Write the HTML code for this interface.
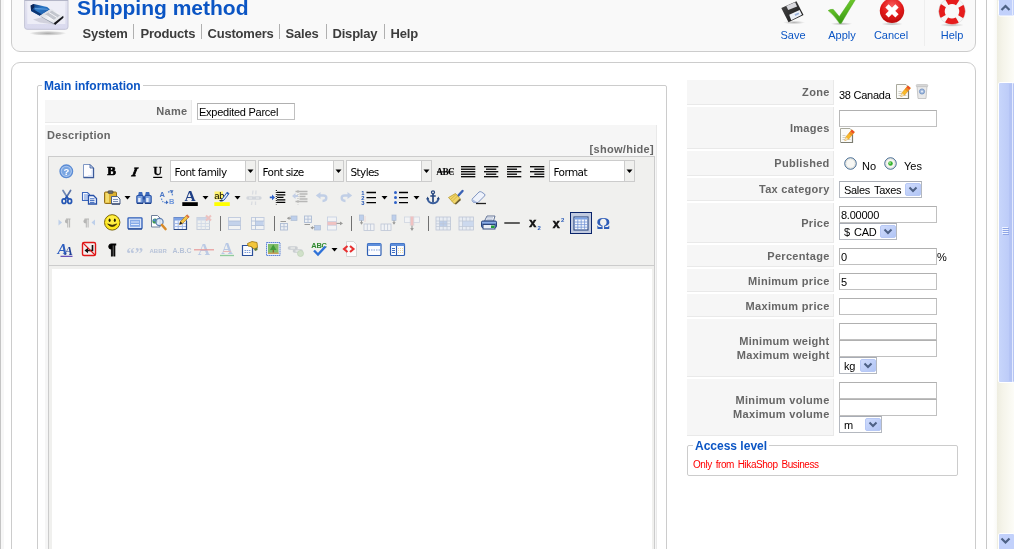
<!DOCTYPE html><html><head><meta charset="utf-8"><title>Shipping method</title><style>
html,body{margin:0;padding:0;overflow:hidden;}
body{width:1014px;height:549px;overflow:hidden;position:relative;background:#fff;font-family:"Liberation Sans",sans-serif;font-size:11px;color:#000;}
div,span,svg{position:absolute;box-sizing:border-box;}
.t{white-space:nowrap;line-height:1;}
.key{background:#f6f6f6;border-bottom:1px solid #e9e9e9;border-right:1px solid #e9e9e9;}
.lab{color:#666;font-weight:bold;font-size:11px;letter-spacing:0.3px;text-align:right;white-space:nowrap;line-height:14px;}
.inp{background:#fff;border:1px solid #c0c0c0;border-top-color:#b0b0b0;border-left-color:#b8b8b8;}
.inp span{left:1px;top:2px;font-size:11px;line-height:12px;white-space:nowrap;letter-spacing:-0.25px;}
.sel{background:#fff;border:1px solid #b4b8bf;border-top-color:#a8acb4}
.sel span.v{left:4px;top:2px;font-size:11px;line-height:12px;white-space:nowrap;letter-spacing:-0.3px;word-spacing:1.5px}
.leg{color:#0B55C4;font-weight:bold;font-size:12px;background:#fff;white-space:nowrap;line-height:14px;padding:0 2px;}
.tb{font-size:11px;color:#0B55C4;white-space:nowrap;line-height:12px;text-align:center;}
.lb{background:#fff;border:1px solid #ccc;}
.lb span{left:4px;top:4px;font-size:11px;line-height:12px;white-space:nowrap;font-family:"DejaVu Sans","Liberation Sans",sans-serif;letter-spacing:-0.5px}
.lbo{background:#f0f0ee;border:1px solid #ccc;border-left:0;}
</style></head><body><div id="wrap" style="left:0;top:0;width:1014px;height:549px;overflow:hidden;will-change:transform">
<div style="left:0px;top:0px;width:1px;height:549px;background:#c4c4c4"></div>
<div style="left:1px;top:0px;width:3px;height:549px;background:#f7f7f7"></div>
<div style="left:986px;top:0px;width:1px;height:549px;background:#c8c8c8"></div>
<div style="left:987px;top:0px;width:10px;height:549px;background:linear-gradient(90deg,#fff 60%,#f9f9f6)"></div>
<div style="left:11px;top:-20px;width:965px;height:72px;border:1px solid #ccc;border-radius:9px;background:#f9f9f9"></div>
<div style="left:11px;top:62px;width:965px;height:520px;border:1px solid #ccc;border-radius:9px;background:#fff"></div>
<svg style="left:23px;top:0px;" width="48" height="40" viewBox="0 0 48 40">
<defs>
<linearGradient id="lgA" x1="0" y1="0" x2="0" y2="1"><stop offset="0" stop-color="#b4b6c8"/><stop offset="0.06" stop-color="#d5d6e4"/><stop offset="0.2" stop-color="#e4e4f0"/><stop offset="1" stop-color="#d9d9ee"/></linearGradient>
<linearGradient id="lgB" x1="0" y1="0" x2="1" y2="1"><stop offset="0" stop-color="#0c2f6a"/><stop offset="0.45" stop-color="#2b78c8"/><stop offset="1" stop-color="#1b4f96"/></linearGradient>
<linearGradient id="lgW" x1="0" y1="0" x2="1" y2="1"><stop offset="0" stop-color="#c9ccd4"/><stop offset="0.5" stop-color="#f4f5f8"/><stop offset="1" stop-color="#d0d3da"/></linearGradient>
<radialGradient id="lgS" cx="0.5" cy="0.5" r="0.5"><stop offset="0" stop-color="#a8a8a8"/><stop offset="0.7" stop-color="#c4c4c4" stop-opacity="0.6"/><stop offset="1" stop-color="#c4c4c4" stop-opacity="0"/></radialGradient>
<filter id="blur1"><feGaussianBlur stdDeviation="0.6"/></filter>
</defs>
<ellipse cx="24.8" cy="33.3" rx="18.5" ry="2.4" fill="url(#lgS)"/>
<rect x="1.6" y="-6" width="43.4" height="35.3" rx="2.5" fill="url(#lgA)" stroke="#c3c4d6" stroke-width="1"/>
<rect x="1.6" y="0" width="43.4" height="1" fill="#b4b6c8"/><rect x="4.3" y="1.2" width="38" height="22.8" fill="#f0f0f8" opacity="0.85"/>
<g filter="url(#blur1)">
<path d="M10 19.5 L20 17 L31 24.6 L17 22.5 Z" fill="#b9bac6" opacity="0.55"/>
<path d="M7.7 5.5 L10.7 4 L24.1 6.9 L27 9.5 L16.8 15.7 L8.1 10.9 Z" fill="url(#lgB)"/>
<path d="M7.7 5.5 L10.7 4 L11.5 7 L8.1 10.9 Z" fill="#0a2558"/>
<path d="M8.1 10.9 L16.8 15.7 L19 14.4 L10 9 Z" fill="#0d3573"/>
<path d="M11.5 7.8 L24 8.8 L25.5 9.7 L12 9.2 Z" fill="#6aa6e4" opacity="0.8"/>
<path d="M16.8 15.7 L27 9.5 L29.2 9.5 L40.2 15.7 L39.4 18.2 L31.4 24.8 L19 17.5 Z" fill="url(#lgW)"/>
<path d="M22 14.2 L29 10.8 L37 15.5 L30.5 20 Z" fill="#b4b8c2" opacity="0.75"/>
<path d="M26 12.5 L34 17.5 M23.5 15.5 L31 20.5" stroke="#f8f8fa" stroke-width="0.9"/>
<path d="M16.8 15.7 L19 17.5 L31.4 24.8 L30.7 23.3 Z" fill="#8c94a4"/>
<path d="M30.7 23.3 L40.2 15.7 L40.5 17.8 L32.1 25.1 Z" fill="#14161a"/>
</g>
</svg>
<div class="t" style="left:77px;top:-4px;font-size:21px;font-weight:bold;color:#0B55C4;line-height:24px;">Shipping method</div>
<div class="t" style="left:82.5px;top:26px;font-size:13px;font-weight:bold;color:#3c3c3c;line-height:15px;letter-spacing:-0.2px">System</div>
<div class="t" style="left:140.5px;top:26px;font-size:13px;font-weight:bold;color:#3c3c3c;line-height:15px;letter-spacing:-0.2px">Products</div>
<div class="t" style="left:207.5px;top:26px;font-size:13px;font-weight:bold;color:#3c3c3c;line-height:15px;letter-spacing:-0.2px">Customers</div>
<div class="t" style="left:285.5px;top:26px;font-size:13px;font-weight:bold;color:#3c3c3c;line-height:15px;letter-spacing:-0.2px">Sales</div>
<div class="t" style="left:332.5px;top:26px;font-size:13px;font-weight:bold;color:#3c3c3c;line-height:15px;letter-spacing:-0.2px">Display</div>
<div class="t" style="left:390.5px;top:26px;font-size:13px;font-weight:bold;color:#3c3c3c;line-height:15px;letter-spacing:-0.2px">Help</div>
<div style="left:133px;top:24px;width:1px;height:15px;background:#b0b0b0"></div>
<div style="left:201px;top:24px;width:1px;height:15px;background:#b0b0b0"></div>
<div style="left:279px;top:24px;width:1px;height:15px;background:#b0b0b0"></div>
<div style="left:326px;top:24px;width:1px;height:15px;background:#b0b0b0"></div>
<div style="left:384px;top:24px;width:1px;height:15px;background:#b0b0b0"></div>
<svg style="left:760px;top:0px;" width="220" height="28" viewBox="0 0 220 28">
<defs>
<linearGradient id="gSave" x1="0" y1="0" x2="1" y2="1"><stop offset="0" stop-color="#4a4a4a"/><stop offset="1" stop-color="#151515"/></linearGradient>
<linearGradient id="gChk" x1="0" y1="0" x2="0.3" y2="1"><stop offset="0" stop-color="#86d83a"/><stop offset="0.55" stop-color="#5dbb24"/><stop offset="1" stop-color="#3a9a14"/></linearGradient>
<radialGradient id="gCan" cx="0.5" cy="0.3" r="0.75"><stop offset="0" stop-color="#f75a5a"/><stop offset="0.55" stop-color="#e21a1a"/><stop offset="1" stop-color="#b30a0a"/></radialGradient>
<radialGradient id="gShd" cx="0.5" cy="0.5" r="0.5"><stop offset="0" stop-color="#b5b5b5"/><stop offset="1" stop-color="#b5b5b5" stop-opacity="0"/></radialGradient>
<filter id="blur2"><feGaussianBlur stdDeviation="0.45"/></filter>
</defs>
<!-- save -->
<ellipse cx="34" cy="22.5" rx="11" ry="1.8" fill="url(#gShd)"/>
<g filter="url(#blur2)">
<path d="M21.3 7.9 L36.5 1.2 L43.5 15 L28.5 22.2 Z" fill="url(#gSave)"/>
<path d="M26.3 5.9 L35.1 2.3 L37.1 6.4 L28.2 9.9 Z" fill="#d9d9de"/>
<path d="M29.2 14.8 L39.6 9.9 L42 14.8 L31.2 20.2 Z" fill="#eef2f9"/>
<path d="M34.5 14.2 L38.5 12.4 L39.3 14 L35.3 15.9 Z" fill="#9db4dc"/>
</g>
<!-- apply -->
<ellipse cx="81.5" cy="23.8" rx="11" ry="1.6" fill="url(#gShd)"/>
<g filter="url(#blur2)">
<path d="M68.2 10.6 Q70.5 9 73.3 9.4 L79.3 16.6 Q86 7 92.5 -3 L97 -3 Q89 10 81.2 23.4 L79.6 23.4 Q74 15 68.2 10.6 Z" fill="url(#gChk)" stroke="#4aa81c" stroke-width="0.5"/>
</g>
<!-- cancel -->
<ellipse cx="132" cy="24" rx="11" ry="1.6" fill="url(#gShd)"/>
<circle cx="132" cy="10.8" r="12.2" fill="url(#gCan)" filter="url(#blur2)"/>
<path d="M127 5.8 L137 15.8 M137 5.8 L127 15.8" stroke="#fff" stroke-width="4.6"/>
<!-- help -->
<ellipse cx="192" cy="25" rx="12" ry="1.8" fill="url(#gShd)"/>
<g filter="url(#blur2)">
<circle cx="192" cy="11.3" r="10.3" fill="none" stroke="#f6f6f6" stroke-width="6"/>
<circle cx="192" cy="11.3" r="10.3" fill="none" stroke="#e61b1b" stroke-width="6" stroke-dasharray="11.4 4.78" stroke-dashoffset="5.7"/>
<circle cx="192" cy="11.3" r="13.4" fill="none" stroke="#d4d4d4" stroke-width="0.5"/>
</g>
</svg>
<div class="tb" style="left:763px;top:29px;width:60px;">Save</div>
<div class="tb" style="left:812px;top:29px;width:60px;">Apply</div>
<div class="tb" style="left:861px;top:29px;width:60px;">Cancel</div>
<div class="tb" style="left:922px;top:29px;width:60px;">Help</div>
<div style="left:924px;top:0px;width:1px;height:46px;background:#eee"></div>
<div style="left:37px;top:85px;width:630px;height:500px;border:1px solid #ccc;border-radius:2px"></div>
<div class="leg" style="left:42px;top:79px;">Main information</div>
<div class="key" style="left:45px;top:100px;width:147px;height:23px;"></div>
<div class="lab" style="left:45px;top:104px;width:142.5px;">Name</div>
<div class="inp" style="left:197px;top:103px;width:98px;height:17px;"><span>Expedited Parcel</span></div>
<div class="key" style="left:45px;top:125px;width:612px;height:460px;"></div>
<div class="lab" style="left:47px;top:128px;text-align:left;">Description</div>
<div class="lab" style="left:500px;top:142px;width:154px;">[show/hide]</div>
<div style="left:48px;top:156px;width:607px;height:430px;border:1px solid #ccc;background:#f0f0ee"></div>
<div style="left:49px;top:265px;width:605px;height:1px;background:#ccc"></div>
<div style="left:52px;top:269px;width:600px;height:300px;background:#fff"></div>
<svg style="left:0;top:0" width="700" height="270" viewBox="0 0 700 270"><g transform="translate(56 161)"><circle cx="10.3" cy="10.3" r="6.3" fill="#a9c6ee" stroke="#5a8bd4" stroke-width="1.3"/>
<circle cx="10.3" cy="10.3" r="4.5" fill="#7aa6e2"/>
<text x="10.3" y="13.6" font-size="9.5" font-weight="bold" text-anchor="middle" fill="#fff" font-family="Liberation Sans, sans-serif">?</text></g>
<g transform="translate(79 161)"><path d="M4.5 3.5 L11 3.5 L14.5 7 L14.5 16.5 L4.5 16.5 Z" fill="#fdfdff" stroke="#7f97c4" stroke-width="1"/>
<path d="M14.5 7 L14.5 16.5 L4.5 16.5" fill="none" stroke="#3b5a99" stroke-width="1.3"/>
<path d="M11 3.5 L11 7 L14.5 7 Z" fill="#c6d4ef" stroke="#3b5a99" stroke-width="0.8"/>
<path d="M9 15 L13.3 15 L13.3 9" fill="none" stroke="#d3def5" stroke-width="1.4"/></g>
<g transform="translate(102 161)"><text x="9.6" y="14.2" font-size="13" font-weight="bold" text-anchor="middle" fill="#000" stroke="#000" stroke-width="0.7" font-family="Liberation Serif, serif">B</text></g>
<g transform="translate(125 161)"><g transform="translate(2.3 0) skewX(-12)"><text x="9.8" y="14.6" font-size="12.5" font-weight="bold" font-style="italic" text-anchor="middle" fill="#000" stroke="#000" stroke-width="0.8" font-family="Liberation Serif, serif">I</text></g></g>
<g transform="translate(148 161)"><text x="9.7" y="14.4" font-size="12" font-weight="bold" text-anchor="middle" fill="#000" stroke="#000" stroke-width="0.3" font-family="Liberation Serif, serif">U</text><rect x="5.2" y="15.8" width="9" height="1.2" fill="#000"/></g>
<rect x="170.5" y="160.5" width="75" height="21" fill="#fff" stroke="#ccc"/><rect x="245.5" y="160.5" width="10" height="21" fill="#f0f0ee" stroke="#ccc"/><text x="174.5" y="175.5" font-size="10.5" font-family="DejaVu Sans, Liberation Sans, sans-serif" letter-spacing="-0.6" fill="#000">Font family</text><path d="M247.5 169.5 L253.5 169.5 L250.5 173 Z" fill="#000"/>
<rect x="258.5" y="160.5" width="75" height="21" fill="#fff" stroke="#ccc"/><rect x="333.5" y="160.5" width="10" height="21" fill="#f0f0ee" stroke="#ccc"/><text x="262.5" y="175.5" font-size="10.5" font-family="DejaVu Sans, Liberation Sans, sans-serif" letter-spacing="-0.6" fill="#000">Font size</text><path d="M335.5 169.5 L341.5 169.5 L338.5 173 Z" fill="#000"/>
<rect x="346.5" y="160.5" width="75" height="21" fill="#fff" stroke="#ccc"/><rect x="421.5" y="160.5" width="10" height="21" fill="#f0f0ee" stroke="#ccc"/><text x="350.5" y="175.5" font-size="10.5" font-family="DejaVu Sans, Liberation Sans, sans-serif" letter-spacing="-0.6" fill="#000">Styles</text><path d="M423.5 169.5 L429.5 169.5 L426.5 173 Z" fill="#000"/>
<g transform="translate(435 161)"><text x="10.2" y="14" font-size="9.3" font-weight="bold" text-anchor="middle" fill="#000" font-family="Liberation Serif, serif" letter-spacing="-0.6">ABC</text><rect x="2" y="10.4" width="16.5" height="1" fill="#000"/></g>
<g transform="translate(458 161)"><rect x="3" y="5.05" width="14.3" height="1.3" fill="#000"/><rect x="3" y="7.549999999999999" width="14.3" height="1.3" fill="#000"/><rect x="3" y="10.049999999999999" width="14.3" height="1.3" fill="#000"/><rect x="3" y="12.549999999999999" width="14.3" height="1.3" fill="#000"/><rect x="3" y="15.049999999999999" width="14.3" height="1.3" fill="#000"/></g>
<g transform="translate(481 161)"><rect x="3" y="5.05" width="14.3" height="1.3" fill="#000"/><rect x="5" y="7.549999999999999" width="10.3" height="1.3" fill="#000"/><rect x="3" y="10.049999999999999" width="14.3" height="1.3" fill="#000"/><rect x="5" y="12.549999999999999" width="10.3" height="1.3" fill="#000"/><rect x="3" y="15.049999999999999" width="14.3" height="1.3" fill="#000"/></g>
<g transform="translate(504 161)"><rect x="3" y="5.05" width="14.3" height="1.3" fill="#000"/><rect x="3" y="7.549999999999999" width="10" height="1.3" fill="#000"/><rect x="3" y="10.049999999999999" width="14.3" height="1.3" fill="#000"/><rect x="3" y="12.549999999999999" width="10" height="1.3" fill="#000"/><rect x="3" y="15.049999999999999" width="14.3" height="1.3" fill="#000"/></g>
<g transform="translate(527 161)"><rect x="3" y="5.05" width="14.3" height="1.3" fill="#000"/><rect x="7.3" y="7.549999999999999" width="10.0" height="1.3" fill="#000"/><rect x="3" y="10.049999999999999" width="14.3" height="1.3" fill="#000"/><rect x="7.3" y="12.549999999999999" width="10.0" height="1.3" fill="#000"/><rect x="3" y="15.049999999999999" width="14.3" height="1.3" fill="#000"/></g>
<rect x="549.5" y="160.5" width="75" height="21" fill="#fff" stroke="#ccc"/><rect x="624.5" y="160.5" width="10" height="21" fill="#f0f0ee" stroke="#ccc"/><text x="553.5" y="175.5" font-size="10.5" font-family="DejaVu Sans, Liberation Sans, sans-serif" letter-spacing="-0.6" fill="#000">Format</text><path d="M626.5 169.5 L632.5 169.5 L629.5 173 Z" fill="#000"/>
<g transform="translate(56 187)"><path d="M7 3.5 L12.3 12" stroke="#7088b4" stroke-width="1.7" stroke-linecap="round"/>
<path d="M14.6 3.5 L9.3 12" stroke="#5a74a8" stroke-width="1.7" stroke-linecap="round"/>
<ellipse cx="8" cy="14.2" rx="1.9" ry="2.3" fill="none" stroke="#2456b4" stroke-width="1.7"/>
<ellipse cx="13.7" cy="14.2" rx="1.9" ry="2.3" fill="none" stroke="#2456b4" stroke-width="1.7"/>
<path d="M9.3 12 L10.8 9.6 L12.3 12" fill="none" stroke="#2456b4" stroke-width="1.6"/></g>
<g transform="translate(79 187)"><path d="M3.5 5.5 L8.5 5.5 L10.5 7.5 L10.5 13.5 L3.5 13.5 Z" fill="#f4f8ff" stroke="#3d68bd" stroke-width="1.1"/>
<path d="M5 8 H9 M5 10 H9 M5 12 H9" stroke="#5f88d6" stroke-width="0.9"/>
<path d="M9.5 8.5 L14.5 8.5 L17.5 11.5 L17.5 17 L9.5 17 Z" fill="#f4f8ff" stroke="#2650a8" stroke-width="1.3"/>
<path d="M11 11.8 H15.5 M11 13.6 H15.5 M11 15.4 H15.5" stroke="#3d68bd" stroke-width="1"/></g>
<g transform="translate(102 187)"><rect x="2.5" y="5" width="12" height="11.5" rx="1" fill="#dcb233" stroke="#94701a" stroke-width="1"/>
<rect x="3.5" y="6" width="3.5" height="9.5" fill="#f3dc6e"/>
<rect x="6" y="3.8" width="5" height="2.6" rx="0.8" fill="#6d6d6d" stroke="#3c3c3c" stroke-width="0.6"/>
<path d="M9.5 9.5 L15.5 9.5 L18 12 L18 17 L9.5 17 Z" fill="#f4f6fb" stroke="#4a5f86" stroke-width="1"/>
<path d="M11 12.5 H16 M11 14.5 H16" stroke="#7f93b8" stroke-width="1"/>
<path d="M10 17 H18" stroke="#39496b" stroke-width="1.3"/></g>
<g transform="translate(134 187)"><path d="M4.8 5 H8.2 L9 9 H4 Z" fill="#3a68bb"/><path d="M11.8 5 H15.2 L16 9 H11 Z" fill="#3a68bb"/>
<rect x="2.8" y="8.5" width="6.4" height="7.8" rx="1" fill="#7fa2dc" stroke="#2751a6" stroke-width="1.1"/>
<rect x="10.8" y="8.5" width="6.4" height="7.8" rx="1" fill="#7fa2dc" stroke="#2751a6" stroke-width="1.1"/>
<rect x="4.2" y="11" width="2.4" height="4" fill="#e6eefc"/><rect x="12.2" y="11" width="2.4" height="4" fill="#e6eefc"/>
<rect x="8.8" y="9.5" width="2.4" height="3" fill="#2751a6"/>
<path d="M3 16.3 H9 M11 16.3 H17" stroke="#1d3f86" stroke-width="1.2"/></g>
<g transform="translate(157 187)"><text x="2.5" y="9.5" font-size="7.5" font-weight="bold" fill="#4a76c6" font-family="Liberation Sans, sans-serif">A</text>
<text x="12" y="17.2" font-size="7.5" font-weight="bold" fill="#6f97dc" font-family="Liberation Sans, sans-serif">B</text>
<path d="M4.5 11.5 Q5 16 9.5 15.5" fill="none" stroke="#5f8ad4" stroke-width="1.3" stroke-dasharray="1.4 1.2"/>
<path d="M9 13.3 L11.5 15.5 L9 17.3 Z" fill="#3a68bb"/>
<path d="M11 5 Q15.5 4 15.5 9" fill="none" stroke="#5f8ad4" stroke-width="1.3" stroke-dasharray="1.4 1.2"/>
<path d="M12.5 3 L16.5 3.2 L15 6.5 Z" fill="#3a68bb" opacity="0.85"/></g>
<g transform="translate(180 187)"><text x="10" y="14.3" font-size="15.5" font-weight="bold" text-anchor="middle" fill="#1f3f86" font-family="Liberation Serif, serif">A</text><rect x="2.3" y="15.2" width="15.5" height="3.8" fill="#000"/></g>
<g transform="translate(212 187)"><rect x="2.5" y="4.5" width="8.5" height="8" fill="#fff36b"/>
<text x="2.3" y="11.6" font-size="9.5" fill="#000" font-family="Liberation Sans, sans-serif" letter-spacing="-0.4">ab</text>
<path d="M8.5 14.2 L10.3 11.8 L15.2 5.2 L17 6.6 L12 13.2 Z" fill="#dfe9fa" stroke="#2f5fb3" stroke-width="1"/>
<path d="M14.3 6.3 L15.2 5.2 L17 6.6 L16 7.8 Z" fill="#2f5fb3"/>
<path d="M7.5 13.5 L10.8 13.8" stroke="#333" stroke-width="1"/>
<rect x="2.3" y="15.2" width="15.5" height="3.8" fill="#ffff00"/></g>
<g transform="translate(244 187)"><g opacity="0.22"><path d="M4 11 H9 M11 11 H16" stroke="#6b7f9e" stroke-width="3.4" stroke-linecap="round"/>
<path d="M5 11 H8 M12 11 H15" stroke="#eef2f8" stroke-width="1.2"/>
<path d="M9 3.5 L8.5 7.5 M12 3.5 L11.8 7.5 M8 14.5 L7.5 18 M11.5 14.5 L11.5 18" stroke="#8a9ab5" stroke-width="1.3"/></g></g>
<g transform="translate(267 187)"><path d="M10 5.4 H18.3 M10 7.9 H18.3 M10 10.4 H16.5 M10 12.9 H18.3 M10 15.4 H18.3" stroke="#000" stroke-width="1.3"/>
<path d="M9.3 3 V17.5" stroke="#000" stroke-width="1" stroke-dasharray="1 1"/>
<path d="M2.8 9.5 H5 V7.5 L8 10.4 L5 13.3 V11.3 H2.8 Z" fill="#2f62c9"/></g>
<g transform="translate(290 187)"><g opacity="0.23"><path d="M5.5 4.5 H17.5 M9.5 7 H17.5 M9.5 9.5 H15.5 M9.5 12 H17.5 M5.5 14.5 H17.5" stroke="#000" stroke-width="1.3"/>
<path d="M8 3 V17.5" stroke="#000" stroke-width="1" stroke-dasharray="1 1"/>
<path d="M8 8 H5.5 V6 L2 9 L5.5 12 V10 H8 Z" fill="#2f62c9"/></g></g>
<g transform="translate(313 187)"><g opacity="0.26"><path d="M7 8.5 H10.5 Q13.3 8.5 13.3 11 Q13.3 13.8 9.5 14" fill="none" stroke="#3f73d0" stroke-width="2.4"/>
<path d="M2.8 8.5 L7.5 5 V12 Z" fill="#3f73d0"/></g></g>
<g transform="translate(336 187)"><g opacity="0.26"><path d="M12 8.5 H8.5 Q5.7 8.5 5.7 11 Q5.7 13.8 9.5 14" fill="none" stroke="#3f73d0" stroke-width="2.4"/>
<path d="M16.2 8.5 L11.5 5 V12 Z" fill="#3f73d0"/></g></g>
<g transform="translate(359 187)"><path d="M7.5 5.5 H17 M7.5 10.6 H17 M7.5 15.6 H17" stroke="#000" stroke-width="1.3"/>
<text x="2.3" y="7.8" font-size="5.8" font-weight="bold" fill="#2456b4" font-family="Liberation Sans, sans-serif">1</text>
<text x="2.3" y="13" font-size="5.8" font-weight="bold" fill="#2456b4" font-family="Liberation Sans, sans-serif">2</text>
<text x="2.3" y="18.2" font-size="5.8" font-weight="bold" fill="#2456b4" font-family="Liberation Sans, sans-serif">3</text></g>
<g transform="translate(391 187)"><path d="M8 5.5 H17 M8 10.6 H17 M8 15.6 H17" stroke="#000" stroke-width="1.3"/>
<circle cx="4.5" cy="5.5" r="1.5" fill="#2f62c9"/><circle cx="4.5" cy="10.6" r="1.5" fill="#2f62c9"/><circle cx="4.5" cy="15.6" r="1.5" fill="#2f62c9"/></g>
<g transform="translate(423 187)"><circle cx="10" cy="5.3" r="1.5" fill="none" stroke="#27477f" stroke-width="1.3"/>
<path d="M10 6.8 V15.5 M7.3 9 H12.7" stroke="#27477f" stroke-width="1.7"/>
<path d="M4.5 11 Q5 16 10 16.3 Q15 16 15.5 11" fill="none" stroke="#3a5e9c" stroke-width="1.9"/>
<path d="M3.3 12.5 L4.5 9.5 L6.3 12.3 Z M16.7 12.5 L15.5 9.5 L13.7 12.3 Z" fill="#27477f"/></g>
<g transform="translate(446 187)"><path d="M11.5 9.5 L16.5 4" stroke="#3a62b5" stroke-width="2.4" stroke-linecap="round"/>
<path d="M2.5 10.5 L9.5 6.5 L14 11.5 L8.5 17 Z" fill="#f0d568" stroke="#b89a30" stroke-width="0.8"/>
<path d="M6 14.5 L11.5 9 M4.5 12.5 L10 7.5" stroke="#d2b23f" stroke-width="0.9"/>
<path d="M8.5 17 L14 11.5 L15 13 L10 17.5 Z" fill="#6a5a2a"/></g>
<g transform="translate(469 187)"><path d="M3.2 12 L10 5 Q11 4.2 12.5 5 L15.5 7 Q16.5 8 15.5 9 L9 15.5 L4.5 15.5 Q2.5 14 3.2 12 Z" fill="#eef2fb" stroke="#7e93bf" stroke-width="1"/>
<path d="M3.2 12 L7 14.5 L9 15.5 L4.5 15.5 Q2.5 14 3.2 12 Z" fill="#aebfe2"/>
<path d="M7 16.5 H17" stroke="#222" stroke-width="1.3"/></g>
<path d="M124.5 196.0 L130.5 196.0 L127.5 199.5 Z" fill="#000"/>
<path d="M202.5 196.0 L208.5 196.0 L205.5 199.5 Z" fill="#000"/>
<path d="M234.5 196.0 L240.5 196.0 L237.5 199.5 Z" fill="#000"/>
<path d="M381.5 196.0 L387.5 196.0 L384.5 199.5 Z" fill="#000"/>
<path d="M413.5 196.0 L419.5 196.0 L416.5 199.5 Z" fill="#000"/>
<rect x="570.5" y="212.5" width="21" height="21" fill="#c2cbe0" stroke="#0a246a"/>
<g transform="translate(56 213)"><g opacity="0.3"><path d="M2.5 6.5 L6 9.5 L2.5 12.5 Z" fill="#4a86e0"/>
<path d="M10 6 H14.5 M11.8 6 V14.5 M13.6 6 V14.5" stroke="#333" stroke-width="1"/><path d="M11.8 6 Q9 6 9 8.2 Q9 10.4 11.8 10.4 Z" fill="#333"/></g></g>
<g transform="translate(79 213)"><g opacity="0.3"><path d="M16 6.5 L12.5 9.5 L16 12.5 Z" fill="#4a86e0"/>
<path d="M5.5 6 H10 M7.3 6 V14.5 M9.1 6 V14.5" stroke="#333" stroke-width="1"/><path d="M7.3 6 Q4.5 6 4.5 8.2 Q4.5 10.4 7.3 10.4 Z" fill="#333"/></g></g>
<g transform="translate(102 213)"><circle cx="10.2" cy="9.4" r="7.7" fill="#ffe91f" stroke="#7a6408" stroke-width="1"/>
<circle cx="10.2" cy="8" r="5.5" fill="#fff45e" opacity="0.6"/>
<ellipse cx="7.6" cy="7.2" rx="1" ry="1.7" fill="#221b00"/><ellipse cx="12.8" cy="7.2" rx="1" ry="1.7" fill="#221b00"/>
<path d="M5.7 11 Q10.2 16 14.7 11 Q10.2 13.6 5.7 11 Z" fill="#3a2a00" stroke="#3a2a00" stroke-width="0.8"/></g>
<g transform="translate(125 213)"><rect x="3" y="4.8" width="14" height="11" rx="0.8" fill="#dbe6f9" stroke="#2d5cb8" stroke-width="1.3"/>
<rect x="5" y="6.8" width="10" height="7" fill="#86aae8"/>
<path d="M6 9 H14 M6 11.5 H14" stroke="#dfe9fb" stroke-width="1.1"/>
<path d="M3 16 H17" stroke="#1d3f86" stroke-width="1"/></g>
<g transform="translate(148 213)"><path d="M3.5 2.5 L9.5 2.5 L12 5 L12 14 L3.5 14 Z" fill="#fff" stroke="#6f7f99" stroke-width="1"/>
<circle cx="7" cy="8" r="2.6" fill="#3f9a4f"/><circle cx="6.3" cy="7.3" r="1.2" fill="#4d86d6"/>
<circle cx="11.5" cy="9" r="3.6" fill="#dbe9fb" fill-opacity="0.8" stroke="#5f7fb0" stroke-width="1.2"/>
<path d="M14 12 L17.5 16" stroke="#d88a2a" stroke-width="2.6" stroke-linecap="round"/></g>
<g transform="translate(171 213)"><rect x="3" y="4.5" width="12.5" height="12" fill="#f1f5fd" stroke="#5877b5" stroke-width="1"/>
<rect x="3" y="4.5" width="12.5" height="3" fill="#7da2e4"/>
<path d="M7.2 7.5 V16.5 M11.4 7.5 V16.5 M3 10.5 H15.5 M3 13.5 H15.5" stroke="#9db6e6" stroke-width="0.9"/>
<path d="M3 16.5 H15.5 V8" fill="none" stroke="#2a4780" stroke-width="1.2"/>
<path d="M8.5 11.5 L9.5 8.5 L16 1.8 L18.2 3.8 L11.5 10.6 Z" fill="#f3c54a" stroke="#b07a18" stroke-width="0.7"/>
<path d="M15 2.8 L16 1.8 L18.2 3.8 L17.2 4.9 Z" fill="#e4674a"/>
<path d="M8.5 11.5 L9.5 8.5 L11.5 10.6 Z" fill="#222"/></g>
<g transform="translate(194 213)"><g opacity="0.22"><rect x="3" y="4.5" width="12.5" height="12" fill="#e8effb" stroke="#34579a" stroke-width="1"/>
<rect x="3" y="4.5" width="12.5" height="3" fill="#4f7fd3"/>
<path d="M7.2 7.5 V16.5 M11.4 7.5 V16.5 M3 10.5 H15.5 M3 13.5 H15.5" stroke="#6b8fd0" stroke-width="0.9"/>
<path d="M12 2.5 L17 7.5 M17 2.5 L12 7.5" stroke="#e02020" stroke-width="2"/></g></g>
<g transform="translate(225 213)"><g opacity="0.4"><rect x="3.5" y="4.5" width="12" height="12" fill="#f4f7fd" stroke="#7f99c8" stroke-width="1"/>
<rect x="4" y="8" width="11" height="4.5" fill="#7fa6e6"/><path d="M3.5 8 H15.5 M3.5 12.5 H15.5" stroke="#4d72b5" stroke-width="0.8"/></g></g>
<g transform="translate(248 213)"><g opacity="0.4"><rect x="3.5" y="4.5" width="12.5" height="12" fill="#f4f7fd" stroke="#7f99c8" stroke-width="1"/>
<rect x="7.5" y="8" width="8" height="4.5" fill="#7fa6e6"/><path d="M3.5 8 H16 M3.5 12.5 H16 M7.5 4.5 V16.5" stroke="#4d72b5" stroke-width="0.8"/></g></g>
<g transform="translate(279 213)"><g opacity="0.45"><rect x="1.5" y="10.5" width="7" height="6.5" fill="#e8effb" stroke="#5f7fb5" stroke-width="0.9"/><path d="M5 10.5 V17 M1.5 13.7 H8.5" stroke="#5f7fb5" stroke-width="0.8"/>
<rect x="12" y="3" width="6" height="4.5" fill="#7fa6e6" stroke="#5f7fb5" stroke-width="0.7"/>
<path d="M12 5.2 H8.5 M1.5 8.5 H7" stroke="#333" stroke-width="1"/><path d="M10.5 3.5 L8 5.2 L10.5 7 Z" fill="#333"/></g></g>
<g transform="translate(302 213)"><g opacity="0.45"><rect x="2.5" y="3" width="7" height="6.5" fill="#e8effb" stroke="#5f7fb5" stroke-width="0.9"/><path d="M6 3 V9.5 M2.5 6.2 H9.5" stroke="#5f7fb5" stroke-width="0.8"/>
<rect x="12.5" y="12.5" width="6" height="4.5" fill="#7fa6e6" stroke="#5f7fb5" stroke-width="0.7"/>
<path d="M12.5 14.7 H9 M2.5 11.5 H8" stroke="#333" stroke-width="1"/><path d="M11 13 L8.5 14.7 L11 16.5 Z" fill="#333"/></g></g>
<g transform="translate(325 213)"><g opacity="0.45"><rect x="2.5" y="4" width="9" height="13" fill="#f4f7fd" stroke="#8fa6cf" stroke-width="0.8"/>
<rect x="2.5" y="8.5" width="9" height="3.8" fill="#f08a8a"/><path d="M2.5 8.5 H11.5 M2.5 12.3 H11.5" stroke="#8fa6cf" stroke-width="0.7"/>
<path d="M11.5 10.4 H17" stroke="#333" stroke-width="1.1"/><path d="M15 8.5 L18 10.4 L15 12.3 Z" fill="#333"/></g></g>
<g transform="translate(356 213)"><g opacity="0.45"><rect x="8" y="11" width="10" height="6.5" fill="#f4f7fd" stroke="#7f93b8" stroke-width="0.8"/><path d="M11.3 11 V17.5 M14.6 11 V17.5" stroke="#7f93b8" stroke-width="0.8"/>
<rect x="3.5" y="2" width="4" height="5.5" fill="#7fa6e6" stroke="#5f7fb5" stroke-width="0.7"/>
<path d="M5.5 7.5 V10.5" stroke="#333" stroke-width="1"/><path d="M3.8 9.3 L5.5 11.8 L7.2 9.3 Z" fill="#333"/><path d="M9 3 V9" stroke="#e8b0b0" stroke-width="0.8"/></g></g>
<g transform="translate(379 213)"><g opacity="0.45"><rect x="2" y="11" width="10" height="6.5" fill="#f4f7fd" stroke="#7f93b8" stroke-width="0.8"/><path d="M5.3 11 V17.5 M8.6 11 V17.5" stroke="#7f93b8" stroke-width="0.8"/>
<rect x="13" y="2" width="4" height="5.5" fill="#7fa6e6" stroke="#5f7fb5" stroke-width="0.7"/>
<path d="M15 7.5 V10.5" stroke="#333" stroke-width="1"/><path d="M13.3 9.3 L15 11.8 L16.7 9.3 Z" fill="#333"/></g></g>
<g transform="translate(402 213)"><g opacity="0.45"><rect x="2.5" y="4" width="15" height="5.5" fill="#f4f7fd" stroke="#a8b6d0" stroke-width="0.8"/>
<rect x="8.2" y="3.5" width="3.6" height="9" fill="#f08a8a"/><path d="M8.2 4 V12.5 M11.8 4 V12.5" stroke="#a8b6d0" stroke-width="0.7"/>
<path d="M10 12.5 V16.5" stroke="#333" stroke-width="1.1"/><path d="M8.2 15 L10 18 L11.8 15 Z" fill="#333"/></g></g>
<g transform="translate(433 213)"><g opacity="0.45"><rect x="3" y="4" width="14.5" height="13" fill="#dfe8f8" stroke="#7f93b8" stroke-width="0.8"/>
<rect x="6.5" y="8" width="7.5" height="5.5" fill="#7fa6e6"/>
<path d="M6.5 4 V17 M10.2 4 V17 M14 4 V17 M3 8 H17.5 M3 10.8 H17.5 M3 13.5 H17.5" stroke="#7f93b8" stroke-width="0.7"/></g></g>
<g transform="translate(456 213)"><g opacity="0.45"><rect x="3" y="4" width="14.5" height="13" fill="#dfe8f8" stroke="#7f93b8" stroke-width="0.8"/>
<rect x="6.5" y="8" width="11" height="5.5" fill="#9fbcee"/>
<path d="M6.5 4 V17 M3 8 H17.5 M3 13.5 H17.5 M10.2 4 V8 M14 4 V8 M10.2 13.5 V17 M14 13.5 V17" stroke="#7f93b8" stroke-width="0.7"/></g></g>
<g transform="translate(479 213)"><path d="M5.5 8 L8 3 L16 3 L14.5 8 Z" fill="#f7f9fd" stroke="#52658a" stroke-width="0.9"/>
<path d="M8 4.8 H14 M7.5 6.3 H13.5" stroke="#9aa8c4" stroke-width="0.7"/>
<rect x="2.5" y="8" width="15" height="6.5" rx="1.2" fill="#6a8cc8" stroke="#2a4680" stroke-width="1"/>
<rect x="4" y="11.5" width="12" height="4.5" fill="#e9eef8" stroke="#203a73" stroke-width="0.9"/>
<rect x="12" y="12.5" width="3.5" height="2.5" fill="#21a038"/>
<path d="M3 9.5 H17" stroke="#8fb0ea" stroke-width="0.9"/></g>
<g transform="translate(502 213)"><rect x="2.3" y="9.4" width="15.5" height="1.2" fill="#000"/></g>
<g transform="translate(525 213)"><text x="4.3" y="13.8" font-size="12.5" font-weight="bold" fill="#111" stroke="#111" stroke-width="0.5" font-family="Liberation Sans, sans-serif">x</text><text x="12.6" y="16.5" font-size="6" font-weight="bold" fill="#2a5bb8" font-family="Liberation Sans, sans-serif">2</text><path d="M4.7 7.7 L11 14 M11 7.7 L4.7 14" stroke="#111" stroke-width="2.1" opacity="0"/></g>
<g transform="translate(548 213)"><text x="4.8" y="15" font-size="12.5" font-weight="bold" fill="#111" stroke="#111" stroke-width="0.5" font-family="Liberation Sans, sans-serif">x</text><text x="13" y="9" font-size="6" font-weight="bold" fill="#2a5bb8" font-family="Liberation Sans, sans-serif">2</text></g>
<g transform="translate(571 213)"><rect x="3" y="4" width="14" height="13" fill="#f4f7fd" stroke="#2a4780" stroke-width="1.1"/>
<rect x="3.5" y="4.5" width="13" height="2" fill="#7da2e4"/>
<path d="M6.8 6.5 V17 M10.2 6.5 V17 M13.6 6.5 V17 M3 9 H17 M3 11.6 H17 M3 14.2 H17" stroke="#6f92d4" stroke-width="0.75"/></g>
<g transform="translate(594 213)"><text x="9.4" y="15.8" font-size="17" font-weight="bold" text-anchor="middle" fill="#2d5cb8" font-family="Liberation Serif, serif">Ω</text></g>
<rect x="220" y="216" width="1" height="15" fill="#707070"/>
<rect x="274" y="216" width="1" height="15" fill="#707070"/>
<rect x="351" y="216" width="1" height="15" fill="#707070"/>
<rect x="428" y="216" width="1" height="15" fill="#707070"/>
<g transform="translate(56 239)"><text x="1.5" y="14.5" font-size="15" font-weight="bold" font-style="italic" fill="#2f5fc0" font-family="Liberation Serif, serif">A</text>
<text x="8.5" y="15.5" font-size="12.5" font-weight="bold" font-style="italic" fill="#1f3f96" font-family="Liberation Serif, serif">A</text>
<path d="M4.5 17.3 H16.5" stroke="#4f35b0" stroke-width="1.1"/></g>
<g transform="translate(79 239)"><rect x="3.5" y="3.5" width="13" height="13" rx="1.5" fill="#f4f0f0" stroke="#e01818" stroke-width="1.4"/>
<path d="M13.5 6 V11.5 H7" fill="none" stroke="#111" stroke-width="1.6"/><path d="M9 8.8 L5.5 11.5 L9 14.2 Z" fill="#111"/>
<path d="M4 4 L16 16" stroke="#e01818" stroke-width="1.1"/></g>
<g transform="translate(102 239)"><text x="10.2" y="15" font-size="14.5" font-weight="bold" text-anchor="middle" fill="#000" stroke="#000" stroke-width="0.8" font-family="Liberation Sans, sans-serif">¶</text></g>
<g transform="translate(125 239)"><g opacity="0.35"><text x="1.2" y="19.5" font-size="17" font-weight="bold" fill="#5f7fc0" font-family="Liberation Serif, serif" letter-spacing="0">“”</text></g></g>
<g transform="translate(148 239)"><g opacity="0.35"><text x="1.5" y="14" font-size="6" font-weight="bold" fill="#4d6fb0" font-family="Liberation Sans, sans-serif">ABBR</text></g></g>
<g transform="translate(171 239)"><g opacity="0.35"><text x="1.5" y="14" font-size="7" font-weight="bold" fill="#4d6fb0" font-family="Liberation Sans, sans-serif">A.B.C</text></g></g>
<g transform="translate(194 239)"><g opacity="0.45"><text x="10" y="15.5" font-size="17" font-weight="bold" text-anchor="middle" fill="#7f9fdc" font-family="Liberation Serif, serif">A</text><path d="M0 10.8 H20" stroke="#e03030" stroke-width="1.2"/></g></g>
<g transform="translate(217 239)"><g opacity="0.5"><text x="10" y="14.5" font-size="16" font-weight="bold" text-anchor="middle" fill="#7f9fdc" font-family="Liberation Serif, serif">A</text><path d="M3 16.5 H17" stroke="#2fa84a" stroke-width="1.3"/><path d="M6 12.5 H14" stroke="#e08080" stroke-width="1"/></g></g>
<g transform="translate(240 239)"><path d="M2.5 6.5 L10.5 6.5 L12.5 8.5 L12.5 16.5 L2.5 16.5 Z" fill="#fbfcff" stroke="#2a4f9a" stroke-width="1.2"/>
<path d="M4.5 11.5 H10.5 M4.5 13.5 H10.5" stroke="#7f9fd8" stroke-width="1" stroke-dasharray="1.5 0.7"/>
<path d="M7.5 4.5 L12 2.5 L17 3.5 L17.5 8.5 L14 10 L11 7.5 L8 7 Z" fill="#f3c63a" stroke="#9a7210" stroke-width="0.8"/>
<path d="M14 10 L17.5 8.5 L17.5 11 L15 12 Z" fill="#5f7a3a"/></g>
<g transform="translate(263 239)"><rect x="3.5" y="3.5" width="13.5" height="13" fill="#e8f0fb" stroke="#4f78d4" stroke-width="0.9" stroke-dasharray="1.5 0.5"/>
<rect x="5" y="5" width="10.5" height="10" fill="#7fbc68"/>
<path d="M10.2 5.5 L13.5 11 L7 11 Z" fill="#3f9a3a"/><rect x="9.7" y="11" width="1.2" height="3" fill="#8a5a2a"/>
<rect x="5" y="13.5" width="10.5" height="1.5" fill="#c9a05a"/></g>
<g transform="translate(286 239)"><g opacity="0.33"><path d="M3.5 9 H10" stroke="#7f8a9a" stroke-width="3.6" stroke-linecap="round"/><path d="M4.5 9 H9" stroke="#eef0f4" stroke-width="1.2"/>
<path d="M8.5 12 H15" stroke="#7f8a9a" stroke-width="3.6" stroke-linecap="round"/><path d="M9.5 12 H14" stroke="#eef0f4" stroke-width="1.2"/>
<circle cx="14.5" cy="14.5" r="3" fill="#8fc07f" stroke="#5f9a4f" stroke-width="0.8"/></g></g>
<g transform="translate(309 239)"><text x="10" y="8.8" font-size="7.5" font-weight="bold" text-anchor="middle" fill="#2f8a2f" font-family="Liberation Sans, sans-serif" letter-spacing="-0.2">ABC</text>
<path d="M5 11.5 L9 15.5 L16.5 7.5" fill="none" stroke="#2f72d8" stroke-width="2.4"/></g>
<g transform="translate(341 239)"><path d="M5.5 2.5 L12.5 2.5 L15.5 5.5 L15.5 17.5 L5.5 17.5 Z" fill="#fbfbfb" stroke="#d0d0d0" stroke-width="0.9"/>
<path d="M6.5 7 L3 10 L6.5 13 M9 7 L12.5 10 L9 13" fill="none" stroke="#e83030" stroke-width="2.1"/></g>
<g transform="translate(364 239)"><rect x="3.5" y="4.5" width="13.5" height="12" rx="1" fill="#fbfcff" stroke="#2f5fb3" stroke-width="1.2"/>
<rect x="3.5" y="4.5" width="13.5" height="2.5" fill="#5f8fdc"/>
<path d="M4.5 11 H16" stroke="#7f9fd8" stroke-width="1" stroke-dasharray="1.5 1"/></g>
<g transform="translate(387 239)"><rect x="3.5" y="4.5" width="14" height="12" rx="1" fill="#fbfcff" stroke="#2f5fb3" stroke-width="1.2"/>
<rect x="3.5" y="4.5" width="14" height="2.5" fill="#5f8fdc"/>
<path d="M9.5 7 V16.5" stroke="#2f5fb3" stroke-width="1.1"/>
<path d="M5 9.5 H8 M5 11.5 H8 M5 13.5 H8" stroke="#3f6fc3" stroke-width="1"/>
<path d="M11 9.5 H16 M11 11.5 H16 M11 13.5 H16" stroke="#f0dca0" stroke-width="1" stroke-dasharray="1 1"/></g>
<path d="M331.5 248.0 L337.5 248.0 L334.5 251.5 Z" fill="#000"/></svg>
<div class="key" style="left:687px;top:80px;width:147px;height:25px;"></div>
<div class="lab" style="left:687px;top:85px;width:142.6px;">Zone</div>
<div class="t" style="left:839px;top:89px;font-size:11px;line-height:12px;letter-spacing:-0.25px">38 Canada</div>
<svg style="left:895px;top:83px;" width="17" height="17" viewBox="0 0 17 17">
<path d="M1.5 1.5 L11 1.5 L13.5 4 L13.5 15.5 L1.5 15.5 Z" fill="#fbfbf8" stroke="#a9a99c" stroke-width="1"/>
<path d="M3.5 12.5 L11.5 12.500 M3.5 10.5 L7 10.500 M3.500 8.500 L6.500 8.500" stroke="#d0d0c8" stroke-width="1"/>
<path d="M13.500 4.500 L13.500 15.5 L2 15.5" fill="none" stroke="#7d7d72" stroke-width="1.2"/>
<path d="M5.800 13.600 L6.800 10 L12.800 2.800 L15.500 5 L9.500 12.200 Z" fill="#f7b928" stroke="#d98b1c" stroke-width="0.5"/>
<path d="M9.800 6.400 L12.800 2.800 L15.500 5 L12.500 8.600 Z" fill="#f08a24"/>
<path d="M11.600 4.200 L12.800 2.800 L15.500 5 L14.300 6.400 Z" fill="#ea4a2c"/>
<path d="M5.800 13.600 L6.800 10 L9.500 12.200 Z" fill="#f1e2b8"/>
</svg>
<svg style="left:915px;top:83px;" width="14" height="17" viewBox="0 0 14 17">
<path d="M2 3 L12 3 L11 15.5 L3 15.5 Z" fill="#e9e9e9" stroke="#bdbdbd" stroke-width="0.8"/>
<rect x="1.2" y="1.5" width="11.6" height="2.2" rx="1" fill="#d6d6d6" stroke="#b5b5b5" stroke-width="0.5"/>
<circle cx="7" cy="8.5" r="2.6" fill="#9fb8dc" stroke="#6f8fc0" stroke-width="0.8"/>
<circle cx="7" cy="8.5" r="1" fill="#e8eef8"/>
</svg>
<div class="key" style="left:687px;top:107px;width:147px;height:42px;"></div>
<div class="lab" style="left:687px;top:121px;width:142.6px;">Images</div>
<div class="inp" style="left:839px;top:110px;width:98px;height:17px;"></div>
<svg style="left:839px;top:127px;" width="17" height="17" viewBox="0 0 17 17">
<path d="M1.5 1.5 L11 1.5 L13.5 4 L13.5 15.5 L1.5 15.5 Z" fill="#fbfbf8" stroke="#a9a99c" stroke-width="1"/>
<path d="M3.5 12.5 L11.5 12.500 M3.5 10.5 L7 10.500 M3.500 8.500 L6.500 8.500" stroke="#d0d0c8" stroke-width="1"/>
<path d="M13.500 4.500 L13.500 15.5 L2 15.5" fill="none" stroke="#7d7d72" stroke-width="1.2"/>
<path d="M5.800 13.600 L6.800 10 L12.800 2.800 L15.500 5 L9.500 12.200 Z" fill="#f7b928" stroke="#d98b1c" stroke-width="0.5"/>
<path d="M9.800 6.400 L12.800 2.800 L15.500 5 L12.500 8.600 Z" fill="#f08a24"/>
<path d="M11.600 4.200 L12.800 2.800 L15.500 5 L14.300 6.400 Z" fill="#ea4a2c"/>
<path d="M5.800 13.600 L6.800 10 L9.500 12.200 Z" fill="#f1e2b8"/>
</svg>
<div class="key" style="left:687px;top:151px;width:147px;height:25px;"></div>
<div class="lab" style="left:687px;top:156px;width:142.6px;">Published</div>
<svg style="left:844px;top:157px;" width="13" height="13" viewBox="0 0 13 13"><circle cx="6.5" cy="6.5" r="5.7" fill="#f7f7f4" stroke="#2b5684" stroke-width="1"/><circle cx="6.5" cy="6.5" r="4.6" fill="none" stroke="#dcdcd4" stroke-width="0.8"/></svg>
<div class="t" style="left:862px;top:160px;font-size:11px;line-height:12px;">No</div>
<svg style="left:884px;top:157px;" width="13" height="13" viewBox="0 0 13 13"><circle cx="6.5" cy="6.5" r="5.7" fill="#f7f7f4" stroke="#2b5684" stroke-width="1"/><circle cx="6.5" cy="6.5" r="4.6" fill="none" stroke="#dcdcd4" stroke-width="0.8"/><circle cx="6.5" cy="6.5" r="2.3" fill="#35b22f"/><circle cx="6" cy="6" r="0.9" fill="#9be58f"/></svg>
<div class="t" style="left:904px;top:160px;font-size:11px;line-height:12px;">Yes</div>
<div class="key" style="left:687px;top:178px;width:147px;height:23px;"></div>
<div class="lab" style="left:687px;top:182px;width:142.6px;">Tax category</div>
<div class="sel" style="left:839px;top:181px;width:83px;height:17px;"><span class="v">Sales Taxes</span><svg style="left:65px;top:1px;" width="16" height="13" viewBox="0 0 16 13"><defs><linearGradient id="xpd65_1" x1="0" y1="0" x2="1" y2="1"><stop offset="0" stop-color="#d0dcfd"/><stop offset="1" stop-color="#b0c4f4"/></linearGradient></defs><rect x="0.5" y="0.5" width="15" height="12" rx="1.5" fill="url(#xpd65_1)" stroke="#b7c8f5"/><path d="M4.5 4.5 L8 8 L11.5 4.5" fill="none" stroke="#4d6185" stroke-width="2"/></svg></div>
<div class="key" style="left:687px;top:203px;width:147px;height:40px;"></div>
<div class="lab" style="left:687px;top:216px;width:142.6px;">Price</div>
<div class="inp" style="left:839px;top:206px;width:98px;height:17px;"><span>8.00000</span></div>
<div class="sel" style="left:839px;top:223px;width:58px;height:17px;"><span class="v">$ CAD</span><svg style="left:40px;top:1px;" width="16" height="13" viewBox="0 0 16 13"><defs><linearGradient id="xpd40_1" x1="0" y1="0" x2="1" y2="1"><stop offset="0" stop-color="#d0dcfd"/><stop offset="1" stop-color="#b0c4f4"/></linearGradient></defs><rect x="0.5" y="0.5" width="15" height="12" rx="1.5" fill="url(#xpd40_1)" stroke="#b7c8f5"/><path d="M4.5 4.5 L8 8 L11.5 4.5" fill="none" stroke="#4d6185" stroke-width="2"/></svg></div>
<div class="key" style="left:687px;top:245px;width:147px;height:22px;"></div>
<div class="lab" style="left:687px;top:249px;width:142.6px;">Percentage</div>
<div class="inp" style="left:839px;top:248px;width:98px;height:17px;"><span>0</span></div>
<div class="t" style="left:937px;top:251px;font-size:11px;line-height:12px;">%</div>
<div class="key" style="left:687px;top:269px;width:147px;height:23px;"></div>
<div class="lab" style="left:687px;top:274px;width:142.6px;">Minimum price</div>
<div class="inp" style="left:839px;top:273px;width:98px;height:17px;"><span>5</span></div>
<div class="key" style="left:687px;top:294px;width:147px;height:23px;"></div>
<div class="lab" style="left:687px;top:299px;width:142.6px;">Maximum price</div>
<div class="inp" style="left:839px;top:298px;width:98px;height:17px;"></div>
<div class="key" style="left:687px;top:319px;width:147px;height:58px;"></div>
<div class="lab" style="left:687px;top:334px;width:142.6px;">Minimum weight<br>Maximum weight</div>
<div class="inp" style="left:839px;top:323px;width:98px;height:17px;"></div>
<div class="inp" style="left:839px;top:340px;width:98px;height:17px;"></div>
<div class="sel" style="left:839px;top:357px;width:38px;height:17px;"><span class="v">kg</span><svg style="left:20px;top:1px;" width="16" height="13" viewBox="0 0 16 13"><defs><linearGradient id="xpd20_1" x1="0" y1="0" x2="1" y2="1"><stop offset="0" stop-color="#d0dcfd"/><stop offset="1" stop-color="#b0c4f4"/></linearGradient></defs><rect x="0.5" y="0.5" width="15" height="12" rx="1.5" fill="url(#xpd20_1)" stroke="#b7c8f5"/><path d="M4.5 4.5 L8 8 L11.5 4.5" fill="none" stroke="#4d6185" stroke-width="2"/></svg></div>
<div class="key" style="left:687px;top:379px;width:147px;height:57px;"></div>
<div class="lab" style="left:687px;top:393px;width:142.6px;">Minimum volume<br>Maximum volume</div>
<div class="inp" style="left:839px;top:382px;width:98px;height:17px;"></div>
<div class="inp" style="left:839px;top:399px;width:98px;height:17px;"></div>
<div class="sel" style="left:839px;top:416px;width:43px;height:17px;"><span class="v">m</span><svg style="left:25px;top:1px;" width="16" height="13" viewBox="0 0 16 13"><defs><linearGradient id="xpd25_1" x1="0" y1="0" x2="1" y2="1"><stop offset="0" stop-color="#d0dcfd"/><stop offset="1" stop-color="#b0c4f4"/></linearGradient></defs><rect x="0.5" y="0.5" width="15" height="12" rx="1.5" fill="url(#xpd25_1)" stroke="#b7c8f5"/><path d="M4.5 4.5 L8 8 L11.5 4.5" fill="none" stroke="#4d6185" stroke-width="2"/></svg></div>
<div style="left:687px;top:445px;width:271px;height:31px;border:1px solid #ccc;border-radius:2px"></div>
<div class="leg" style="left:693px;top:439px;">Access level</div>
<div class="t" style="left:693px;top:459px;font-size:10px;color:#f00;line-height:11px;letter-spacing:-0.45px;word-spacing:1.6px">Only from HikaShop Business</div>
<svg style="left:997px;top:0px;" width="17" height="549" viewBox="0 0 17 549">
<defs>
<linearGradient id="sTrack" x1="0" y1="0" x2="1" y2="0"><stop offset="0" stop-color="#eeede0"/><stop offset="0.35" stop-color="#f5f4ea"/><stop offset="1" stop-color="#fcfcf7"/></linearGradient>
<linearGradient id="sThumb" x1="0" y1="0" x2="1" y2="0"><stop offset="0" stop-color="#c8d6fb"/><stop offset="0.7" stop-color="#bccbf8"/><stop offset="1" stop-color="#b2c2f2"/></linearGradient>
</defs>
<rect x="0" y="0" width="17" height="549" fill="url(#sTrack)"/>
<rect x="1.5" y="82.5" width="16" height="300" rx="1.5" fill="url(#sThumb)" stroke="#fff" stroke-width="1"/><rect x="12" y="84" width="3" height="297" fill="#aebef2" opacity="0.5"/><rect x="15" y="83" width="1" height="299" fill="#e4ebfe"/>
<path d="M5 227.5 H11 M5 229.5 H11 M5 231.5 H11 M5 233.5 H11" stroke="#eef3ff" stroke-width="1"/>
<path d="M6 228.5 H12 M6 230.5 H12 M6 232.5 H12 M6 234.5 H12" stroke="#8ea5e6" stroke-width="1"/>
<rect x="1.5" y="-1" width="16" height="17" rx="1.5" fill="#c2d1fb" stroke="#fff" stroke-width="1"/>
<path d="M4.5 10 L8.5 6 L12.5 10" fill="none" stroke="#4d6185" stroke-width="2.2"/><rect x="15" y="0" width="1" height="16" fill="#e4ebfe"/><rect x="15" y="534" width="1" height="15" fill="#e4ebfe"/>
<rect x="1.5" y="533.5" width="16" height="17" rx="1.5" fill="#c2d1fb" stroke="#fff" stroke-width="1"/>
<path d="M4.5 538.5 L8.5 542.5 L12.5 538.5" fill="none" stroke="#4d6185" stroke-width="2.2"/>
</svg>
</div></body></html>
